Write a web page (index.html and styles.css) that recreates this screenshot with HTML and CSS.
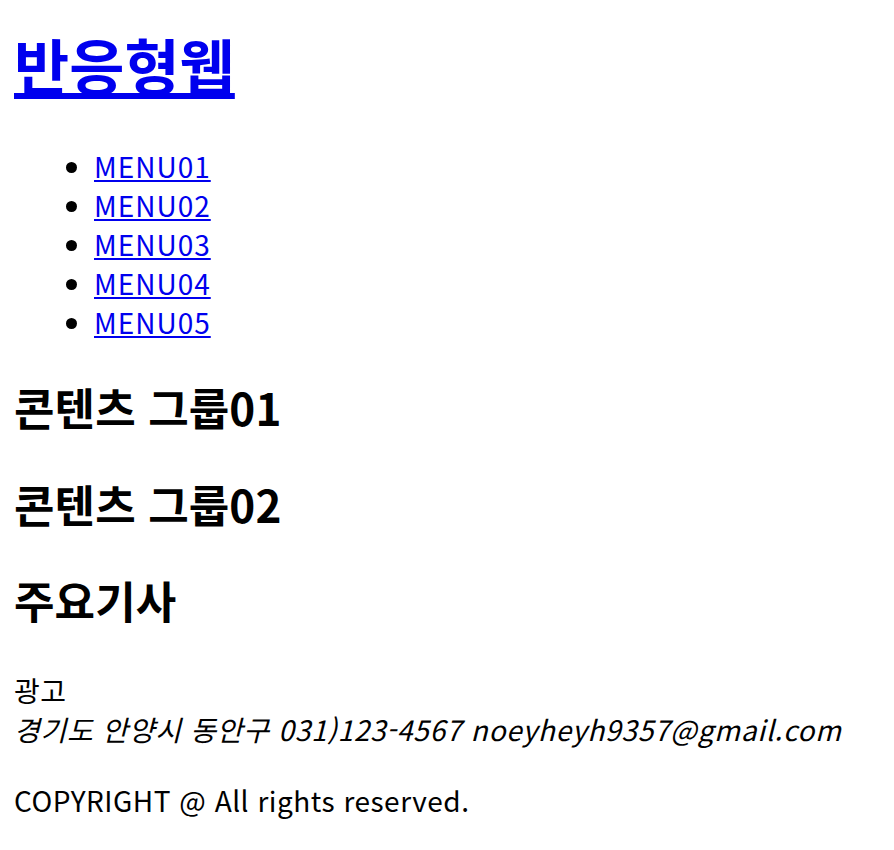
FILE: index.html
```html
<!DOCTYPE html>
<html lang="ko">
<head>
<meta charset="utf-8">
<title>반응형웹</title>
<link rel="stylesheet" href="styles.css">
</head>
<body>
<header class="header">
  <h1 class="logo"><a href="#">반응형웹</a></h1>
  <nav class="nav">
    <ul class="menu">
      <li><a href="#">MENU01</a></li>
      <li><a href="#">MENU02</a></li>
      <li><a href="#">MENU03</a></li>
      <li><a href="#">MENU04</a></li>
      <li><a href="#">MENU05</a></li>
    </ul>
  </nav>
</header>
<main class="main">
  <section class="group"><h2 class="group-title">콘텐츠 그룹01</h2></section>
  <section class="group"><h2 class="group-title">콘텐츠 그룹02</h2></section>
  <section class="group"><h2 class="group-title">주요기사</h2></section>
</main>
<aside class="ad">광고</aside>
<footer class="footer">
  <address class="address">경기도 안양시 동안구 031)123-4567 noeyheyh9357@gmail.com</address>
  <p class="copy">COPYRIGHT @ All rights reserved.</p>
</footer>
</body>
</html>
```

FILE: styles.css
```css
html, body {
  background: #fff;
}
body {
  margin: 0;
  padding: 0 14px;
  font-family: "Noto Sans CJK KR", "Noto Sans", sans-serif;
  font-size: 28px;
  line-height: 39px;
  letter-spacing: 0.6px;
  color: #000;
}
a {
  color: #0000ee;
}
.logo {
  margin: 29px 0 0;
  font-size: 60px;
  line-height: 70px;
  font-weight: 700;
  letter-spacing: 0;
}
.menu {
  margin: 48px 0 0;
  padding-left: 80px;
  list-style: disc;
}
.menu li a {
  letter-spacing: 1px;
}
.main {
  margin-top: 39px;
}
.group-title {
  margin: 44.5px 0;
  font-size: 44px;
  line-height: 52px;
  font-weight: 700;
  letter-spacing: 0.1px;
}
.main .group:first-child .group-title {
  margin-top: 0;
}
.main .group:last-child .group-title {
  margin-bottom: 0;
}
.ad {
  margin-top: 45px;
}
.address {
  font-style: italic;
  letter-spacing: 0.75px;
}
.copy {
  margin: 32px 0 0;
  letter-spacing: 0.5px;
}
```
